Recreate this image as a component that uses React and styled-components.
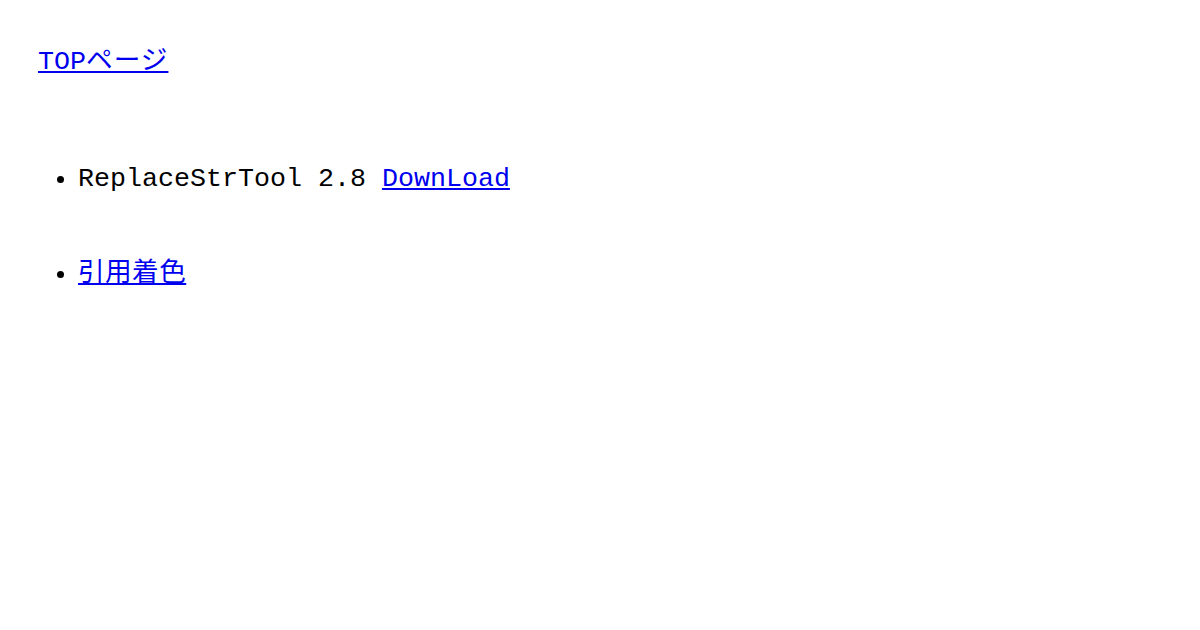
import React from 'react';
import styled, { createGlobalStyle } from 'styled-components';

const GlobalStyle = createGlobalStyle`
  body {
    margin: 0;
    background: #ffffff;
  }
`;

const Page = styled.div`
  padding: 38px;
  font-family: 'Liberation Mono', 'Noto Sans CJK JP', monospace;
  font-size: 26.67px;
  color: #000000;
`;

const TopLine = styled.div`
  margin: 0;
`;

const Link = styled.a`
  color: #0000ee;
  text-decoration: underline;
  cursor: pointer;
`;

const Kana = styled.span`
  letter-spacing: ${(p) => p.$spacing || '0.6px'};
`;

const List = styled.ul`
  margin: 87px 0 0 0;
  padding-left: 40px;
`;

const Item = styled.li`
  margin-bottom: 56px;
`;

const App = () => {
  return (
    <Page>
      <GlobalStyle />
      <TopLine>
        <Link href="#">TOP<Kana $spacing="1px">ページ</Kana></Link>
      </TopLine>
      <List>
        <Item>
          ReplaceStrTool 2.8 <Link href="#">DownLoad</Link>
        </Item>
        <Item>
          <Link href="#"><Kana $spacing="0.4px">引用着色</Kana></Link>
        </Item>
      </List>
    </Page>
  );
};

export default App;
